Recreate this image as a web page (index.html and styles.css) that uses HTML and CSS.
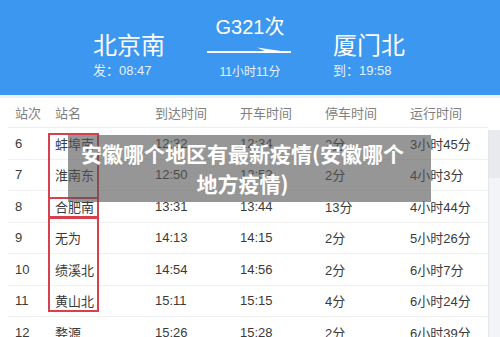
FILE: index.html
```html
<!DOCTYPE html>
<html lang="zh-CN">
<head>
<meta charset="utf-8">
<link rel="stylesheet" href="styles.css">
</head>
<body>
<div class="page">
  <header class="hero">
    <div class="station">
      <div class="name">北京南</div>
      <div class="time">发：08:47</div>
    </div>
    <div class="train">
      <div class="code">G321次</div>
      <svg class="arrow" width="86" height="10" viewBox="0 0 86 10">
        <rect x="0" y="4" width="84" height="2" fill="#fff"/>
        <polygon points="50,0.5 84,5.5 60,5" fill="#fff"/>
      </svg>
      <div class="dur">11小时11分</div>
    </div>
    <div class="station">
      <div class="name">厦门北</div>
      <div class="time">到：19:58</div>
    </div>
  </header>
  <div class="band"></div>
  <div class="table">
    <div class="row head">
      <span>站次</span><span>站名</span><span>到达时间</span><span>开车时间</span><span>停车时间</span><span>运行时间</span>
    </div>
    <div class="body">
      <div class="rows">
        <div class="row"><span>6</span><span>蚌埠南</span><span>12:32</span><span>12:34</span><span>2分</span><span>3小时45分</span></div>
        <div class="row"><span>7</span><span>淮南东</span><span>12:50</span><span>12:52</span><span>2分</span><span>4小时3分</span></div>
        <div class="row"><span>8</span><span>合肥南</span><span>13:31</span><span>13:44</span><span>13分</span><span>4小时44分</span></div>
        <div class="row"><span>9</span><span>无为</span><span>14:13</span><span>14:15</span><span>2分</span><span>5小时26分</span></div>
        <div class="row"><span>10</span><span>绩溪北</span><span>14:54</span><span>14:56</span><span>2分</span><span>6小时7分</span></div>
        <div class="row"><span>11</span><span>黄山北</span><span>15:11</span><span>15:15</span><span>4分</span><span>6小时24分</span></div>
        <div class="row"><span>12</span><span>婺源</span><span>15:26</span><span>15:28</span><span>2分</span><span>6小时39分</span></div>
        <div class="mark mark-a"></div>
        <div class="mark mark-b"></div>
        <div class="mark mark-c"></div>
      </div>
      <div class="gutter"><div class="thumb"></div></div>
    </div>
  </div>
  <div class="caption">安徽哪个地区有最新疫情(安徽哪个<br>地方疫情)</div>
</div>
</body>
</html>
```
FILE: styles.css
```css
* { box-sizing: border-box; }
html, body { margin: 0; padding: 0; }
body {
  font-family: "Liberation Sans", "Noto Sans CJK SC", sans-serif;
  background: #fff;
  width: 500px;
  height: 337px;
  overflow: hidden;
}
.page { position: relative; width: 500px; height: 337px; overflow: hidden; }
.hero {
  height: 95px;
  background: #3c97f0;
  color: #fff;
  display: flex;
  padding-left: 93px;
}
.station { width: 114px; padding-top: 32px; }
.station:last-child { width: auto; }
.name { font-size: 24px; line-height: 28px; letter-spacing: 0; }
.time { font-size: 13px; line-height: 16px; margin-top: 3px; color: #e6f1fd; }
.train {
  width: 86px;
  margin-right: 40px;
  padding-top: 15px;
  display: flex;
  flex-direction: column;
  align-items: center;
}
.code { font-size: 20px; line-height: 24px; }
.arrow { display: block; margin-top: 8px; }
.dur { font-size: 12px; line-height: 16px; margin-top: 7px; color: #eaf3fd; }
.band { height: 3px; background: #eef2f7; }
.row {
  display: grid;
  grid-template-columns: 40px 100px 85px 85px 85px 1fr;
  padding-left: 15px;
  align-items: center;
  font-size: 13px;
  color: #3a3a3a;
  height: 31.5px;
  border-bottom: 1px solid #f1f1f1;
}
.row.head {
  height: 30px;
  color: #808080;
  border-bottom: 1px solid #eeeeee;
  margin: 0 12px 0 8px;
  padding-left: 7px;
}
.body { display: flex; }
.rows { position: relative; width: 488px; padding-left: 8px; }
.rows .row { padding-left: 7px; }
.gutter {
  flex: 1;
  background: #f2f4f7;
  border-left: 1px solid #e4e6ea;
  margin-top: 2px;
}
.thumb { height: 48px; background: #e8eaee; }
.mark {
  position: absolute;
  left: 48px;
  width: 51px;
  border: 2px solid #d8404e;
}
.mark-a { top: 5px; height: 66px; }
.mark-b { top: 69px; height: 21px; }
.mark-c { top: 89px; height: 95px; }
.caption {
  position: absolute;
  left: 68px;
  top: 135px;
  width: 363px;
  height: 67px;
  padding: 3px 14px 0 0;
  background: rgba(85, 85, 85, 0.62);
  color: #fff;
  font-family: "Noto Sans CJK SC", sans-serif;
  font-weight: 700;
  font-size: 21px;
  line-height: 30px;
  text-align: center;
}
```
